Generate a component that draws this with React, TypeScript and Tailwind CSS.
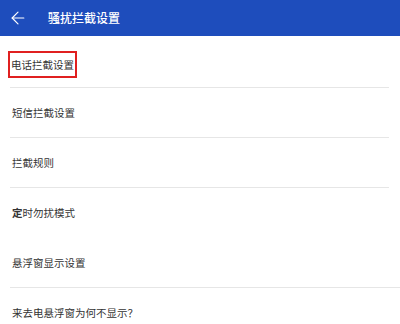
import { ArrowLeft } from "lucide-react";

const font = { fontFamily: '"Noto Sans CJK SC", "Noto Sans", sans-serif' };

function Row({
  children,
  divider = true,
  wide = false,
  className = "",
}: {
  children: React.ReactNode;
  divider?: boolean;
  wide?: boolean;
  className?: string;
}) {
  return (
    <div className={`relative flex h-[50px] items-center pl-3 ${className}`}>
      <span className="text-[10.5px] text-[#333333]">{children}</span>
      {divider && (
        <div
          className={`absolute bottom-0 left-[10px] h-px bg-[#e6e6e6] ${
            wide ? "right-0" : "right-[11px]"
          }`}
        />
      )}
    </div>
  );
}

export default function App() {
  return (
    <div className="h-[324px] w-[400px] overflow-hidden bg-white" style={font}>
      <div className="flex h-9 items-center bg-[#1e4dbc] text-white">
        <ArrowLeft size={20} strokeWidth={1.4} className="ml-[8px]" />
        <span className="ml-[20px] text-[12px] font-medium">骚扰拦截设置</span>
      </div>
      <Row className="h-[52px] pt-[4px]">
        <span className="-ml-[4px] inline-block border-2 border-[#e02020] px-[1px] py-[3px] leading-[17px]">
          电话拦截设置
        </span>
      </Row>
      <Row>短信拦截设置</Row>
      <Row>拦截规则</Row>
      <Row divider={false}>
        <span className="font-bold">定</span>时勿扰模式
      </Row>
      <Row wide>悬浮窗显示设置</Row>
      <Row divider={false}>来去电悬浮窗为何不显示？</Row>
    </div>
  );
}
